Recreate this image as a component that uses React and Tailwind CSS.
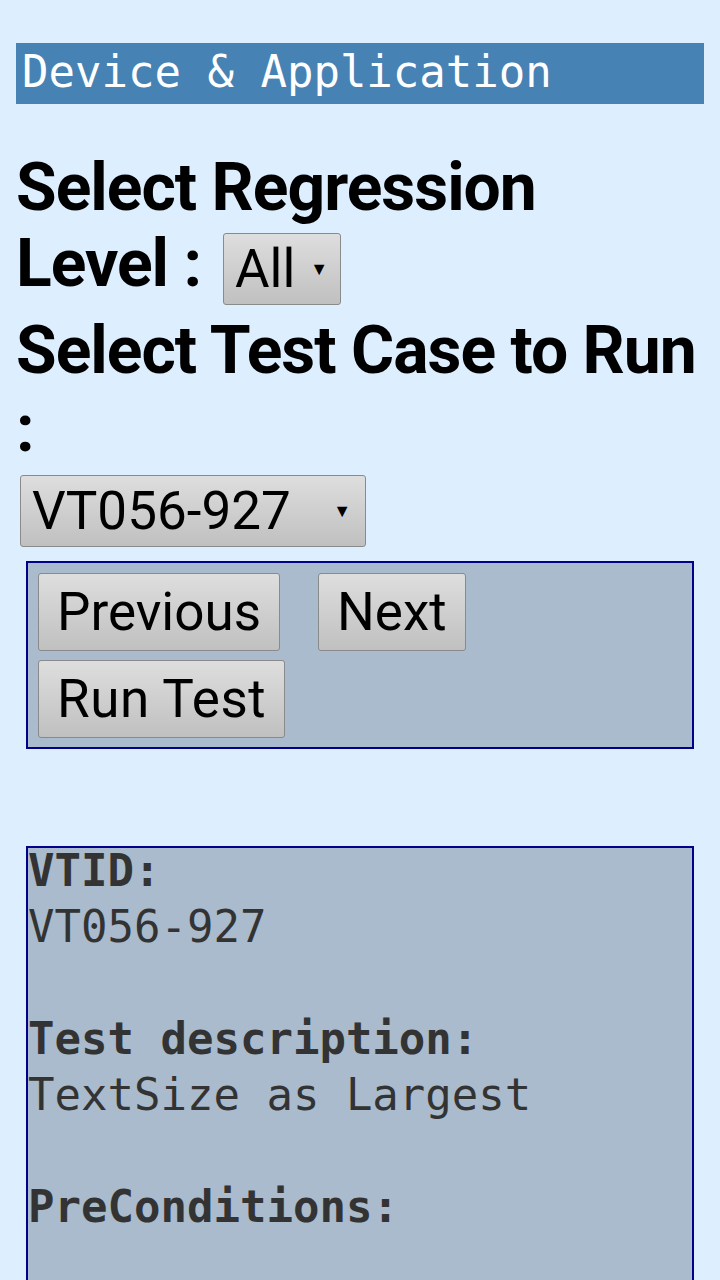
export default function App() {
  const mono = { fontFamily: '"DejaVu Sans Mono", "Liberation Mono", monospace' };
  const btn =
    "rounded-[3px] border border-[#8a8a8a] bg-gradient-to-b from-[#dedede] to-[#c0c0c0] px-[18px] py-[7px] text-[53px] leading-[1.172] text-black";

  return (
    <div className="min-h-[1280px] bg-[#ddeeff] px-4 pt-[43px]" style={{ fontFamily: 'Roboto, "Noto Sans", sans-serif' }}>
      <div className="h-[61px] bg-[#4682b4] pl-[6px] text-[44px] leading-[58px] text-white" style={mono}>
        Device &amp; Application
      </div>

      <div className="mt-[46px] text-[66px] font-bold leading-[76px] text-black tracking-[-1px]">
        Select Regression
        <br />
        Level :
        <span className="ml-[22px] inline-flex h-[72px] w-[118px] items-center justify-between rounded-[3px] border border-[#8a8a8a] bg-gradient-to-b from-[#dedede] to-[#c0c0c0] pl-[11px] pr-[12px] align-[-1px] text-[53px] font-normal tracking-normal">
          All
          <span className="text-[18px]">▼</span>
        </span>
      </div>

      <div className="mt-[7px] text-[66px] font-bold leading-[78px] text-black tracking-[-1px]">
        Select Test Case to Run
        <br />:
      </div>

      <div className="mt-[7px] ml-[4px] flex h-[72px] w-[346px] items-center justify-between rounded-[3px] border border-[#8a8a8a] bg-gradient-to-b from-[#dedede] to-[#c0c0c0] pl-[11px] pr-[14px] text-[53px] leading-none text-black">
        VT056-927
        <span className="text-[18px]">▼</span>
      </div>

      <div className="mt-[14px] ml-[10px] mr-[10px] border-2 border-[#00008b] bg-[#a9bbcc] px-[10px] pt-[10px] pb-[9px]">
        <div className="flex gap-[38px]">
          <button className={btn}>Previous</button>
          <button className={btn}>Next</button>
        </div>
        <div className="mt-[9px]">
          <button className={`${btn} tracking-[0.5px]`}>Run Test</button>
        </div>
      </div>

      <div className="mt-[97px] ml-[10px] mr-[10px] h-[440px] overflow-hidden border-2 border-[#00008b] bg-[#a9bbcc] text-[44px] leading-[56px] text-[#333333]" style={mono}>
        <div className="-mt-[5px]">
          <div className="font-bold">VTID:</div>
          <div>VT056-927</div>
          <div>&nbsp;</div>
          <div className="font-bold">Test description:</div>
          <div>TextSize as Largest</div>
          <div>&nbsp;</div>
          <div className="font-bold">PreConditions:</div>
        </div>
      </div>
    </div>
  );
}
